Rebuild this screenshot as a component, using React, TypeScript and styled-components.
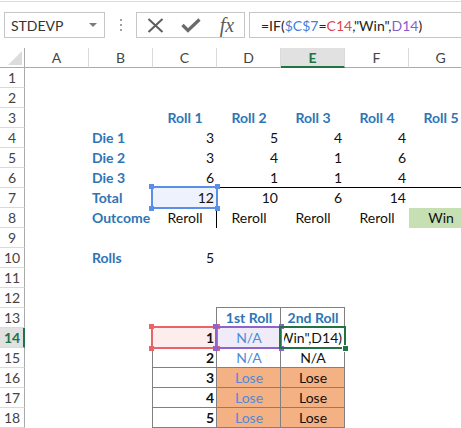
import React from "react";
import styled, { createGlobalStyle, css } from "styled-components";

const GlobalStyle = createGlobalStyle`
  html, body { margin: 0; padding: 0; background: #fff; }
  body { font-family: Lato, "Liberation Sans", sans-serif; }
`;

const headBlue = "#2e75b6";
const refBlue = "#4f8bd6";
const orange = "#f4b183";
const winGreen = "#c6e0b4";
const xlGreen = "#217346";

const Page = styled.div`
  width: 461px;
  height: 428px;
  overflow: hidden;
  background: #fff;
`;

const TopBar = styled.div`
  height: 47px;
  box-sizing: border-box;
  margin-top: 1px;
  border-top: 1px solid #dadada;
  display: flex;
  align-items: flex-start;
  padding: 10px 0 0 4px;
`;

const NameBox = styled.div`
  width: 101px;
  height: 26px;
  box-sizing: border-box;
  border: 1px solid #c6c6c6;
  display: flex;
  align-items: center;
  padding: 0 6px 0 6px;
  font-size: 14px;
  color: #333;
`;

const NameText = styled.span`
  flex: 1;
`;

const Arrow = styled.span`
  width: 0;
  height: 0;
  border-left: 4px solid transparent;
  border-right: 4px solid transparent;
  border-top: 4px solid #7a7a7a;
  margin-right: 1px;
`;

const Grip = styled.div`
  width: 31px;
  height: 26px;
  display: flex;
  flex-direction: column;
  align-items: center;
  justify-content: center;
  gap: 3px;
`;

const Dot = styled.span`
  width: 2px;
  height: 2px;
  background: #a0a0a0;
`;

const FxBox = styled.div`
  width: 109px;
  height: 26px;
  box-sizing: border-box;
  border: 1px solid #c6c6c6;
  display: flex;
  align-items: center;
  padding-left: 8px;
  gap: 16px;
`;

const IconSlot = styled.span`
  width: 20px;
  display: flex;
  justify-content: center;
  align-items: center;
`;

const Fx = styled.span`
  font-family: "Liberation Serif", "DejaVu Serif", serif;
  font-style: italic;
  font-size: 20px;
  color: #5a5a5a;
  line-height: 20px;
`;

const FormulaBox = styled.div`
  flex: 1;
  height: 26px;
  margin-left: 4px;
  box-sizing: border-box;
  border: 1px solid #c6c6c6;
  border-right: none;
  display: flex;
  align-items: center;
  padding-left: 11px;
  font-size: 14px;
  color: #222;
  white-space: nowrap;
`;

const Ref = styled.span<{ $c: string }>`
  color: ${(p) => p.$c};
`;

const Sheet = styled.div`
  display: flex;
  flex-direction: column;
`;

const Row = styled.div`
  display: flex;
  height: 20px;
`;

const Corner = styled.div`
  width: 25px;
  height: 20px;
  flex: none;
  box-sizing: border-box;
  border-right: 1px solid #ababab;
  border-bottom: 1px solid #ababab;
  display: flex;
  justify-content: flex-end;
  align-items: flex-end;
  padding: 0 2px 2px 0;
`;

const Triangle = styled.span`
  width: 0;
  height: 0;
  border-left: 14px solid transparent;
  border-bottom: 14px solid #dcdcdc;
`;

const ColHeader = styled.div<{ $on?: boolean }>`
  width: 64px;
  height: 20px;
  flex: none;
  box-sizing: border-box;
  border-right: 1px solid #dadada;
  border-bottom: 1px solid #ababab;
  text-align: center;
  font-size: 14px;
  line-height: 19px;
  color: #444;
  ${(p) =>
    p.$on &&
    css`
      background: #e1e1e1;
      color: ${xlGreen};
      font-weight: bold;
      border-bottom: 2px solid ${xlGreen};
    `}
`;

const RowHeader = styled.div<{ $on?: boolean }>`
  width: 25px;
  height: 20px;
  flex: none;
  box-sizing: border-box;
  border-right: 1px solid #ababab;
  border-bottom: 1px solid #dadada;
  text-align: center;
  font-size: 14px;
  line-height: 19px;
  color: #444;
  ${(p) =>
    p.$on &&
    css`
      background: #e1e1e1;
      color: ${xlGreen};
      font-weight: bold;
      border-right: 2px solid ${xlGreen};
      padding-left: 1px;
    `}
`;

type Align = "left" | "center" | "right";

const Cell = styled.div<{
  $align: Align;
  $bold?: boolean;
  $color?: string;
  $bg?: string;
  $box?: boolean;
  $bottom?: boolean;
  $right?: boolean;
}>`
  width: 64px;
  height: 20px;
  flex: none;
  position: relative;
  box-sizing: border-box;
  padding: 0 3px;
  display: flex;
  justify-content: ${(p) =>
    p.$align === "left" ? "flex-start" : p.$align === "center" ? "center" : "flex-end"};
  font-size: 14px;
  line-height: 20px;
  white-space: nowrap;
  font-weight: ${(p) => (p.$bold ? "bold" : "normal")};
  color: ${(p) => p.$color ?? "#111"};
  background: ${(p) => p.$bg ?? "transparent"};
  box-shadow: ${(p) =>
    p.$bottom ? "inset 0 -1px 0 #000" : p.$right ? "inset -1px 0 0 #000" : "none"};
  ${(p) =>
    p.$box &&
    css`
      &::before {
        content: "";
        position: absolute;
        left: -1px;
        top: -1px;
        width: 65px;
        height: 21px;
        box-sizing: border-box;
        border: 1px solid #808080;
        pointer-events: none;
      }
    `}
`;

const Clip = styled.span`
  display: flex;
  justify-content: flex-end;
  overflow: hidden;
  width: 100%;
  margin-left: -2px;
`;

const Range = styled.div<{ $c: string }>`
  position: absolute;
  left: -2px;
  top: -2px;
  width: 67px;
  height: 23px;
  box-sizing: border-box;
  border: 2px solid ${(p) => p.$c};
  z-index: 2;
`;

const Handle = styled.span<{ $c: string; $x: "l" | "r"; $y: "t" | "b"; $ring?: boolean }>`
  position: absolute;
  width: 5px;
  height: 5px;
  background: ${(p) => p.$c};
  ${(p) => (p.$x === "l" ? "left: -4px;" : "right: -4px;")}
  ${(p) => (p.$y === "t" ? "top: -4px;" : "bottom: -4px;")}
  ${(p) => p.$ring && "outline: 1px solid #fff;"}
`;

type Sel = "blue" | "red" | "purple" | "active";

type CellSpec = {
  v?: string;
  align?: Align;
  bold?: boolean;
  color?: string;
  bg?: string;
  box?: boolean;
  bottom?: boolean;
  right?: boolean;
  sel?: Sel;
  edit?: boolean;
};

const selColor: Record<Sel, string> = {
  blue: "#5b8fe6",
  red: "#e8636a",
  purple: "#8f62cc",
  active: xlGreen,
};

const cols = ["A", "B", "C", "D", "E", "F", "G"];

const label = (v: string): CellSpec => ({ v, align: "left", bold: true, color: headBlue });
const num = (v: string, extra: Partial<CellSpec> = {}): CellSpec => ({ v, align: "right", ...extra });
const head = (v: string, extra: Partial<CellSpec> = {}): CellSpec => ({
  v,
  align: "center",
  bold: true,
  color: headBlue,
  ...extra,
});
const mid = (v: string, extra: Partial<CellSpec> = {}): CellSpec => ({ v, align: "center", ...extra });

const data: Record<number, Record<string, CellSpec>> = {
  3: { C: head("Roll 1"), D: head("Roll 2"), E: head("Roll 3"), F: head("Roll 4"), G: head("Roll 5") },
  4: { B: label("Die 1"), C: num("3"), D: num("5"), E: num("4"), F: num("4") },
  5: { B: label("Die 2"), C: num("3"), D: num("4"), E: num("1"), F: num("6") },
  6: {
    B: label("Die 3"),
    C: num("6", { bottom: true }),
    D: num("1", { bottom: true }),
    E: num("1", { bottom: true }),
    F: num("4", { bottom: true }),
    G: { bottom: true },
  },
  7: {
    B: label("Total"),
    C: num("12", { sel: "blue", bg: "#edf2fc" }),
    D: num("10"),
    E: num("6"),
    F: num("14"),
  },
  8: {
    B: label("Outcome"),
    C: mid("Reroll", { right: true }),
    D: mid("Reroll"),
    E: mid("Reroll"),
    F: mid("Reroll"),
    G: mid("Win", { bg: winGreen }),
  },
  10: { B: label("Rolls"), C: num("5") },
  13: { D: head("1st Roll", { box: true }), E: head("2nd Roll", { box: true }) },
  14: {
    C: num("1", { bold: true, box: true, sel: "red", bg: "#fdeded" }),
    D: mid("N/A", { color: refBlue, box: true, sel: "purple", bg: "#efebf9" }),
    E: { v: '=IF($C$7=C14,"Win",D14)', box: true, sel: "active", edit: true },
  },
  15: {
    C: num("2", { bold: true, box: true }),
    D: mid("N/A", { color: refBlue, box: true }),
    E: mid("N/A", { box: true }),
  },
};

[16, 17, 18].forEach((r, i) => {
  data[r] = {
    C: num(String(i + 3), { bold: true, box: true }),
    D: mid("Lose", { color: refBlue, box: true, bg: orange }),
    E: mid("Lose", { box: true, bg: orange }),
  };
});

const Selection: React.FC<{ kind: Sel }> = ({ kind }) => {
  const c = selColor[kind];
  if (kind === "active") {
    return (
      <Range $c={c}>
        <Handle $c={c} $x="r" $y="b" $ring />
      </Range>
    );
  }
  return (
    <Range $c={c}>
      <Handle $c={c} $x="l" $y="t" />
      <Handle $c={c} $x="r" $y="t" />
      <Handle $c={c} $x="l" $y="b" />
      <Handle $c={c} $x="r" $y="b" />
    </Range>
  );
};

const SheetCell: React.FC<{ spec: CellSpec }> = ({ spec }) => (
  <Cell
    $align={spec.edit ? "right" : spec.align ?? "left"}
    $bold={spec.bold}
    $color={spec.color}
    $bg={spec.bg}
    $box={spec.box}
    $bottom={spec.bottom}
    $right={spec.right}
  >
    {spec.edit ? (
      <Clip>
        <span>{spec.v}</span>
      </Clip>
    ) : (
      spec.v
    )}
    {spec.sel && <Selection kind={spec.sel} />}
  </Cell>
);

const App: React.FC = () => {
  const rows = Array.from({ length: 18 }, (_, i) => i + 1);
  return (
    <Page>
      <GlobalStyle />
      <TopBar>
        <NameBox>
          <NameText>STDEVP</NameText>
          <Arrow />
        </NameBox>
        <Grip>
          <Dot />
          <Dot />
          <Dot />
        </Grip>
        <FxBox>
          <IconSlot>
            <svg width="17" height="15" viewBox="0 0 17 15">
              <path d="M1.5 1 L15.5 14 M15.5 1 L1.5 14" stroke="#5e5e5e" strokeWidth="2" fill="none" />
            </svg>
          </IconSlot>
          <IconSlot>
            <svg width="20" height="15" viewBox="0 0 20 15">
              <path d="M1.5 7 L7 12.5 L18.5 1.5" stroke="#6a6a6a" strokeWidth="3.2" fill="none" />
            </svg>
          </IconSlot>
          <IconSlot>
            <Fx>fx</Fx>
          </IconSlot>
        </FxBox>
        <FormulaBox>
          =IF(<Ref $c="#3f7fd8">$C$7</Ref>=<Ref $c="#e0474c">C14</Ref>,"Win",
          <Ref $c="#8a5cc9">D14</Ref>)
        </FormulaBox>
      </TopBar>
      <Sheet>
        <Row>
          <Corner>
            <Triangle />
          </Corner>
          {cols.map((c) => (
            <ColHeader key={c} $on={c === "E"}>
              {c}
            </ColHeader>
          ))}
        </Row>
        {rows.map((r) => (
          <Row key={r}>
            <RowHeader $on={r === 14}>{r}</RowHeader>
            {cols.map((c) => (
              <SheetCell key={c} spec={data[r]?.[c] ?? {}} />
            ))}
          </Row>
        ))}
      </Sheet>
    </Page>
  );
};

export default App;
